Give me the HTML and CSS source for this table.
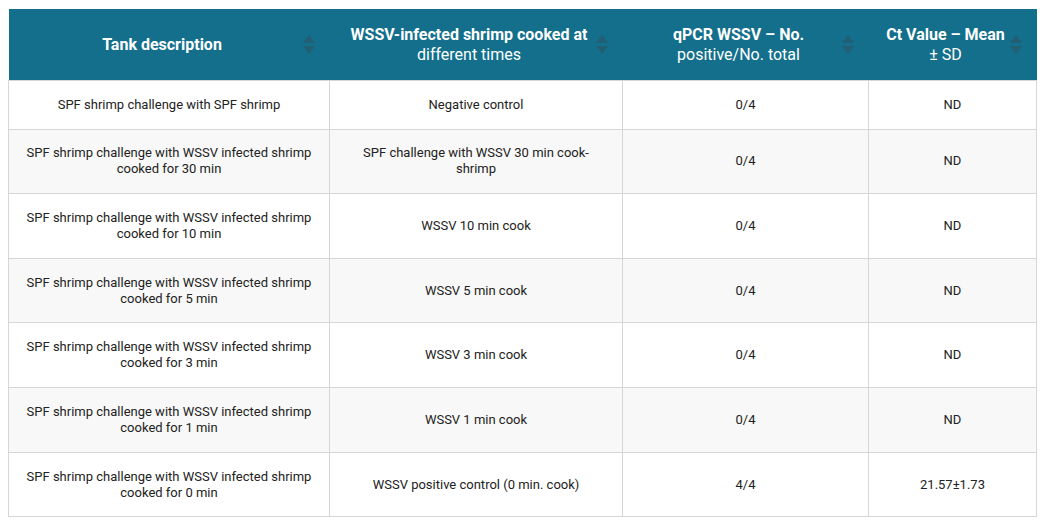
FILE: index.html
```html
<!DOCTYPE html>
<html>
<head>
<meta charset="utf-8">
<link rel="stylesheet" href="styles.css">
</head>
<body>
<table class="data">
  <colgroup>
    <col class="c1"><col class="c2"><col class="c3"><col class="c4">
  </colgroup>
  <thead>
    <tr>
      <th><strong>Tank description</strong><span class="sort"></span></th>
      <th><strong>WSSV-infected shrimp cooked at</strong> different times<span class="sort"></span></th>
      <th><strong>qPCR WSSV – No.</strong> positive/No. total<span class="sort"></span></th>
      <th><strong>Ct Value – Mean</strong> ± SD<span class="sort"></span></th>
    </tr>
  </thead>
  <tbody>
    <tr class="short"><td>SPF shrimp challenge with SPF shrimp</td><td>Negative control</td><td>0/4</td><td>ND</td></tr>
    <tr><td>SPF shrimp challenge with WSSV infected shrimp cooked for 30 min</td><td>SPF challenge with WSSV 30 min cook-shrimp</td><td>0/4</td><td>ND</td></tr>
    <tr><td>SPF shrimp challenge with WSSV infected shrimp cooked for 10 min</td><td>WSSV 10 min cook</td><td>0/4</td><td>ND</td></tr>
    <tr><td>SPF shrimp challenge with WSSV infected shrimp cooked for 5 min</td><td>WSSV 5 min cook</td><td>0/4</td><td>ND</td></tr>
    <tr><td>SPF shrimp challenge with WSSV infected shrimp cooked for 3 min</td><td>WSSV 3 min cook</td><td>0/4</td><td>ND</td></tr>
    <tr><td>SPF shrimp challenge with WSSV infected shrimp cooked for 1 min</td><td>WSSV 1 min cook</td><td>0/4</td><td>ND</td></tr>
    <tr><td>SPF shrimp challenge with WSSV infected shrimp cooked for 0 min</td><td>WSSV positive control (0 min. cook)</td><td>4/4</td><td>21.57±1.73</td></tr>
  </tbody>
</table>
</body>
</html>
```

FILE: styles.css
```css
html, body {
  margin: 0;
  padding: 0;
  background: #ffffff;
}
body {
  padding: 9px 15px 0 8px;
  font-family: Roboto, "Liberation Sans", Arial, sans-serif;
}
.data {
  width: 1028px;
  border-collapse: collapse;
  table-layout: fixed;
}
.c1 { width: 321px; }
.c2 { width: 293px; }
.c3 { width: 246px; }
.c4 { width: 168px; }

.data th {
  position: relative;
  background: #136f8b;
  color: #ffffff;
  font-size: 16px;
  font-weight: 400;
  line-height: 20px;
  height: 71px;
  box-sizing: border-box;
  padding: 2px 30px 0 16px;
  text-align: center;
  vertical-align: middle;
  border: none;
}
.data th strong { font-weight: 700; }

.sort {
  position: absolute;
  right: 15px;
  top: 50%;
  width: 12px;
  height: 20px;
  margin-top: -9px;
}
.sort::before,
.sort::after {
  content: "";
  position: absolute;
  left: 0;
  border-left: 6px solid transparent;
  border-right: 6px solid transparent;
}
.sort::before {
  top: 0;
  border-bottom: 8px solid #235f74;
}
.sort::after {
  top: 11px;
  border-top: 8px solid #235f74;
}

.data td {
  font-size: 13px;
  line-height: 16px;
  color: #222222;
  text-align: center;
  vertical-align: middle;
  border: 1px solid #d6d6d6;
  height: 64.67px;
  box-sizing: border-box;
  padding: 8px 12px;
}
.data td:nth-child(2) { padding: 8px 22px; }
.data tr.short td { height: 49px; }
.data tbody tr:nth-child(even) td { background: #f8f8f8; }
.data thead th { border-bottom: 1px solid #d6d6d6; }
```
